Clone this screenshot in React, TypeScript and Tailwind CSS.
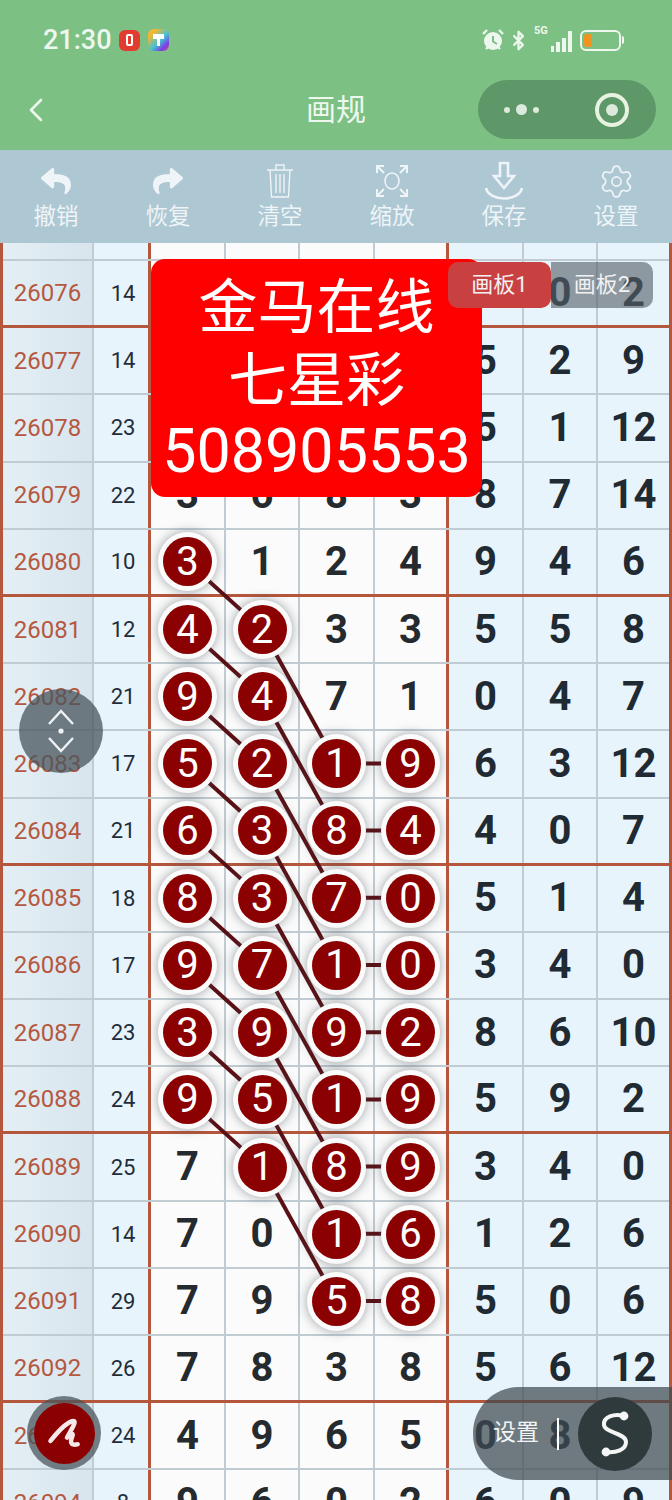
import { Bluetooth, ChevronLeft, Settings } from "lucide-react";
import { FaReply, FaShare } from "react-icons/fa";

type Row = { id: number; sum: number; mid: (number | null)[]; right: number[]; marks: string };

// marks: one character per middle column, "o" draws the number in a ball
const rows: Row[] = [
  { id: 26076, sum: 14, mid: [null, null, null, null], right: [5, 0, 2], marks: "...." },
  { id: 26077, sum: 14, mid: [null, null, null, null], right: [5, 2, 9], marks: "...." },
  { id: 26078, sum: 23, mid: [null, null, null, null], right: [5, 1, 12], marks: "...." },
  { id: 26079, sum: 22, mid: [3, 6, 8, 3], right: [8, 7, 14], marks: "...." },
  { id: 26080, sum: 10, mid: [3, 1, 2, 4], right: [9, 4, 6], marks: "o..." },
  { id: 26081, sum: 12, mid: [4, 2, 3, 3], right: [5, 5, 8], marks: "oo.." },
  { id: 26082, sum: 21, mid: [9, 4, 7, 1], right: [0, 4, 7], marks: "oo.." },
  { id: 26083, sum: 17, mid: [5, 2, 1, 9], right: [6, 3, 12], marks: "oooo" },
  { id: 26084, sum: 21, mid: [6, 3, 8, 4], right: [4, 0, 7], marks: "oooo" },
  { id: 26085, sum: 18, mid: [8, 3, 7, 0], right: [5, 1, 4], marks: "oooo" },
  { id: 26086, sum: 17, mid: [9, 7, 1, 0], right: [3, 4, 0], marks: "oooo" },
  { id: 26087, sum: 23, mid: [3, 9, 9, 2], right: [8, 6, 10], marks: "oooo" },
  { id: 26088, sum: 24, mid: [9, 5, 1, 9], right: [5, 9, 2], marks: "oooo" },
  { id: 26089, sum: 25, mid: [7, 1, 8, 9], right: [3, 4, 0], marks: ".ooo" },
  { id: 26090, sum: 14, mid: [7, 0, 1, 6], right: [1, 2, 6], marks: "..oo" },
  { id: 26091, sum: 29, mid: [7, 9, 5, 8], right: [5, 0, 6], marks: "..oo" },
  { id: 26092, sum: 26, mid: [7, 8, 3, 8], right: [5, 6, 12], marks: "...." },
  { id: 26093, sum: 24, mid: [4, 9, 6, 5], right: [0, 8, 7], marks: "...." },
  { id: 26094, sum: 8, mid: [9, 6, 0, 2], right: [6, 0, 9], marks: "...." },
];

const ROW_H = 67.19;
const TOP_ROW = 18;
const COL_X = [184.5, 259, 333.5, 407.5];
const centerY = (i: number) => TOP_ROW + ROW_H * i + ROW_H / 2 - 1.5;

// Links between neighbouring balls of the hand-drawn pattern
function linkLines() {
  const out: { x1: number; y1: number; x2: number; y2: number }[] = [];
  rows.forEach((r, i) => {
    [...r.marks].forEach((m, c) => {
      if (m !== "o") return;
      if (c === 0 && rows[i + 1]?.marks[1] === "o") out.push({ x1: COL_X[0], y1: centerY(i), x2: COL_X[1], y2: centerY(i + 1) });
      if (c === 1 && rows[i + 2]?.marks[2] === "o") out.push({ x1: COL_X[1], y1: centerY(i), x2: COL_X[2], y2: centerY(i + 2) });
      if (c === 2 && r.marks[3] === "o") out.push({ x1: COL_X[2], y1: centerY(i), x2: COL_X[3], y2: centerY(i) });
    });
  });
  return out;
}

const gridCols = "grid-cols-[91px_57px_75px_74px_75px_74px_75px_74px_71px]";
const thinR = "border-r-2 border-[#c0cbd2]";

function Ball({ n }: { n: number | null }) {
  return (
    <div className="relative z-10 flex h-[59px] w-[59px] items-center justify-center rounded-full bg-[#fbfbfb] shadow-[0_0_11px_rgba(60,70,80,0.5)]">
      <div className="flex h-[49px] w-[49px] items-center justify-center rounded-full bg-[#8b0000] text-[40px] font-normal leading-none text-white">
        {n}
      </div>
    </div>
  );
}

function BoardRow({ row }: { row: Row }) {
  const heavy = (row.id - 26076) % 4 === 0;
  return (
    <div className={`grid h-[67.19px] ${gridCols} ${heavy ? "border-b-[3px] border-[#b5573c]" : "border-b-2 border-[#c0cbd2]"}`}>
      <div className={`flex items-center justify-center bg-[linear-gradient(90deg,#e4eff5,#d8e5ed)] text-[24px] text-[#b5583f] ${thinR}`}>
        {row.id}
      </div>
      <div className="flex items-center justify-center border-r-[3px] border-[#b5573c] bg-[#e8f4fb] pl-1 text-[22px] text-[#1f2d3a]">
        {row.sum}
      </div>
      {row.mid.map((n, c) => (
        <div
          key={c}
          className={`flex items-center justify-center bg-[#fbfbfb] text-[40px] font-bold text-[#252a2e] ${
            c === 3 ? "border-r-[3px] border-[#b5573c]" : thinR
          }`}
        >
          {row.marks[c] === "o" ? <Ball n={n} /> : n}
        </div>
      ))}
      {row.right.map((n, c) => (
        <div
          key={c}
          className={`flex items-center justify-center bg-[#e8f4fb] text-[40px] font-bold text-[#1f2a33] ${c < 2 ? thinR : ""}`}
        >
          {n}
        </div>
      ))}
    </div>
  );
}

function StatusIcons() {
  return (
    <div className="flex items-center text-[#eef7ee]">
      <svg width="24" height="24" viewBox="0 0 24 24" className="mr-[3px]">
        <circle cx="12" cy="13" r="9" fill="currentColor" />
        <path d="M12 8v5.5l4 2.5" fill="none" stroke="#7cc084" strokeWidth="2" />
        <path d="M2 6l4-4M22 6l-4-4M5 21l2-2M19 21l-2-2" stroke="currentColor" strokeWidth="2.4" />
      </svg>
      <Bluetooth size={21} strokeWidth={2.6} className="mr-[5px]" />
      <div className="relative mr-[8px] h-[24px] w-[38px]">
        <span className="absolute left-0 top-[-4px] text-[11px] font-bold leading-[14px]">5G</span>
        <div className="absolute bottom-0 right-0 flex items-end gap-[2px]">
          <span className="h-[6px] w-[3px] bg-current" />
          <span className="h-[10px] w-[4px] bg-current" />
          <span className="h-[14px] w-[4px] bg-current" />
          <span className="h-[21px] w-[4px] bg-current" />
        </div>
      </div>
      <div className="flex items-center">
        <div className="h-[21px] w-[41px] rounded-[6px] border-2 border-[#eef7ee] p-[2px]">
          <div className="h-full w-[7px] rounded-l-[3px] bg-[#f0941f]" />
        </div>
        <span className="ml-[1px] h-[8px] w-[2px] rounded-r bg-[#eef7ee]" />
      </div>
    </div>
  );
}

function Tool({ label, children }: { label: string; children: React.ReactNode }) {
  return (
    <div className="flex flex-col items-center">
      <div className="flex h-[42px] w-[44px] items-center justify-center text-[#eef4f7]">{children}</div>
      <span className="text-[22.5px] leading-[28px] text-[#eef4f7]">{label}</span>
    </div>
  );
}

export default function App() {
  return (
    <div className="relative h-[1500px] w-[672px] overflow-hidden bg-white [font-family:Roboto,'Noto_Sans_CJK_SC',sans-serif]">
      {/* green mini-program header */}
      <header className="h-[150px] bg-[#7cc084] text-[#eef7ee]">
        <div className="flex h-[80px] items-center justify-between pl-[43px] pr-[48px]">
          <div className="flex items-center">
            <span className="text-[27px] font-medium leading-none">21:30</span>
            <div className="ml-[7px] flex h-[21px] w-[21px] items-center justify-center rounded-[6px] bg-[#e23b30]">
              <span className="h-[12px] w-[7px] rounded-[2px] border-2 border-white" />
            </div>
            <div className="ml-[8px] flex h-[22px] w-[21px] items-center justify-center rounded-[6px] bg-[linear-gradient(135deg,#f5b731_20%,#43c4d6_55%,#7a3fe0_80%,#e8409a)]">
              <svg width="13" height="14" viewBox="0 0 13 14">
                <path d="M1 1h11v5H8v7H5V6H1z" fill="#fff" />
              </svg>
            </div>
          </div>
          <StatusIcons />
        </div>
        <div className="relative flex h-[70px] items-start justify-between pl-[16px] pr-[16px]">
          <ChevronLeft size={40} strokeWidth={1.6} className="mt-[10px]" />
          <span className="absolute left-0 right-0 top-[10px] text-center text-[30px] leading-[40px]">画规</span>
          <div className="flex h-[59px] w-[178px] items-center rounded-full bg-[#5e9868] pl-[26px]">
            <div className="flex items-center gap-[6px]">
              <span className="h-[6px] w-[6px] rounded-full bg-[#dceadd]" />
              <span className="h-[11px] w-[11px] rounded-full bg-[#dceadd]" />
              <span className="h-[6px] w-[6px] rounded-full bg-[#dceadd]" />
            </div>
            <div className="ml-[56px] flex h-[34px] w-[34px] items-center justify-center rounded-full border-[4px] border-[#e7f2e0]">
              <span className="h-[12px] w-[12px] rounded-full bg-[#dceadd]" />
            </div>
          </div>
        </div>
      </header>

      {/* drawing tools */}
      <nav className="grid h-[93px] grid-cols-6 bg-[#adc7d3] pt-[10px]">
        <Tool label="撤销"><FaReply size={30} /></Tool>
        <Tool label="恢复"><FaShare size={30} /></Tool>
        <Tool label="清空">
          <svg width="28" height="36" viewBox="0 0 28 36" fill="none" stroke="currentColor" strokeWidth="1.4">
            <path d="M1 7h26M10 7V2h8v5M4 7l1.5 27h17L24 7M10 11v19M14 11v19M18 11v19" />
          </svg>
        </Tool>
        <Tool label="缩放">
          <svg width="34" height="34" viewBox="0 0 34 34" fill="none" stroke="currentColor" strokeWidth="2">
            <path d="M2 9V2h7M32 9V2h-7M2 25v7h7M32 25v7h-7M3 3l6 6M31 3l-6 6M3 31l6-6M31 31l-6-6" />
            <ellipse cx="17" cy="17" rx="7" ry="8" strokeWidth="1.6" />
          </svg>
        </Tool>
        <Tool label="保存">
          <svg width="40" height="40" viewBox="0 0 40 40" fill="none" stroke="currentColor" strokeWidth="2.6">
            <path d="M16 2h8v13h6L20 27 10 15h6zM2 27c3 14 33 14 36 0" />
          </svg>
        </Tool>
        <Tool label="设置"><Settings size={37} strokeWidth={1.1} /></Tool>
      </nav>

      {/* number board */}
      <main className="relative border-x-[3px] border-[#b5573c]">
        <div className={`grid h-[18px] ${gridCols} border-b-2 border-[#c0cbd2]`}>
          <div className={`bg-[linear-gradient(90deg,#e4eff5,#d8e5ed)] ${thinR}`} />
          <div className="border-r-[3px] border-[#b5573c] bg-[#e8f4fb]" />
          <div className={`bg-[#fbfbfb] ${thinR}`} />
          <div className={`bg-[#fbfbfb] ${thinR}`} />
          <div className={`bg-[#fbfbfb] ${thinR}`} />
          <div className="border-r-[3px] border-[#b5573c] bg-[#fbfbfb]" />
          <div className={`bg-[#e8f4fb] ${thinR}`} />
          <div className={`bg-[#e8f4fb] ${thinR}`} />
          <div className="bg-[#e8f4fb]" />
        </div>
        {rows.map((r) => (
          <BoardRow key={r.id} row={r} />
        ))}
        <svg className="pointer-events-none absolute left-0 top-0 h-[1300px] w-[666px]">
          {linkLines().map((l, i) => (
            <line key={i} {...l} stroke="#5a1116" strokeWidth="4" />
          ))}
        </svg>

        {/* pinned notice */}
        <div className="absolute left-[148px] top-[16px] z-20 flex h-[238px] w-[331px] flex-col items-center justify-center rounded-[14px] bg-[#ff0000] text-white">
          <div className="text-[59px] leading-[73px]">金马在线</div>
          <div className="text-[59px] leading-[73px]">七星彩</div>
          <div className="text-[61px] leading-[69px]">508905553</div>
        </div>

        {/* board switcher */}
        <div className="absolute left-[445px] top-[19px] z-30 flex text-[22px] leading-[46px] text-[#f2f2f2]">
          <div className="h-[46px] w-[103px] rounded-[10px] bg-[#c84040] text-center">画板1</div>
          <div className="h-[46px] w-[102px] rounded-r-[10px] bg-[rgba(85,95,105,0.62)] text-center">画板2</div>
        </div>
      </main>

      {/* floating page scroller */}
      <div className="absolute left-[19px] top-[689px] z-30 flex h-[84px] w-[84px] flex-col items-center justify-center rounded-full bg-[rgba(72,84,92,0.75)]">
        <svg width="26" height="44" viewBox="0 0 26 44" fill="none" stroke="#eef2f4" strokeWidth="2.4">
          <path d="M1 15L13 2l12 13M1 29l12 13 12-13" />
          <circle cx="13" cy="22" r="2.6" fill="#eef2f4" stroke="none" />
        </svg>
      </div>

      {/* brush button */}
      <div className="absolute left-[27px] top-[1396px] z-30 flex h-[74px] w-[74px] items-center justify-center rounded-full bg-[rgba(75,85,92,0.75)]">
        <div className="flex h-[61px] w-[61px] items-center justify-center rounded-full bg-[#8b0000]">
          <svg width="61" height="61" viewBox="0 0 74 74" fill="none" stroke="#f6e8e8" strokeWidth="5.5" strokeLinecap="round" strokeLinejoin="round">
            <path d="M20 46C28 36 40 22 48 22c4 0-3 11-8 20 4-5 7-6 7-3-1 3-3 6-2 9 1 3 5 3 8 2" />
          </svg>
        </div>
      </div>

      {/* settings drawer handle */}
      <div className="absolute left-[473px] top-[1387px] z-30 flex h-[93px] w-[199px] items-center rounded-l-[46px] bg-[rgba(62,74,80,0.72)]">
        <span className="ml-[20px] text-[23px] text-[#f2f5f6]">设置</span>
        <span className="ml-[18px] h-[32px] w-[2px] bg-white" />
        <div className="ml-[19px] flex h-[74px] w-[74px] items-center justify-center rounded-full bg-[#2e3a3c]">
          <svg width="74" height="74" viewBox="0 0 74 74" fill="none" stroke="#f4f6f6" strokeWidth="4">
            <path d="M46 19C36 16 25 20 26 28 27 36 48 36 48 45 48 53 38 56 28 55" />
            <circle cx="46" cy="19" r="4.4" fill="#f4f6f6" stroke="none" />
            <circle cx="28" cy="55" r="4.4" fill="#f4f6f6" stroke="none" />
          </svg>
        </div>
      </div>
    </div>
  );
}
